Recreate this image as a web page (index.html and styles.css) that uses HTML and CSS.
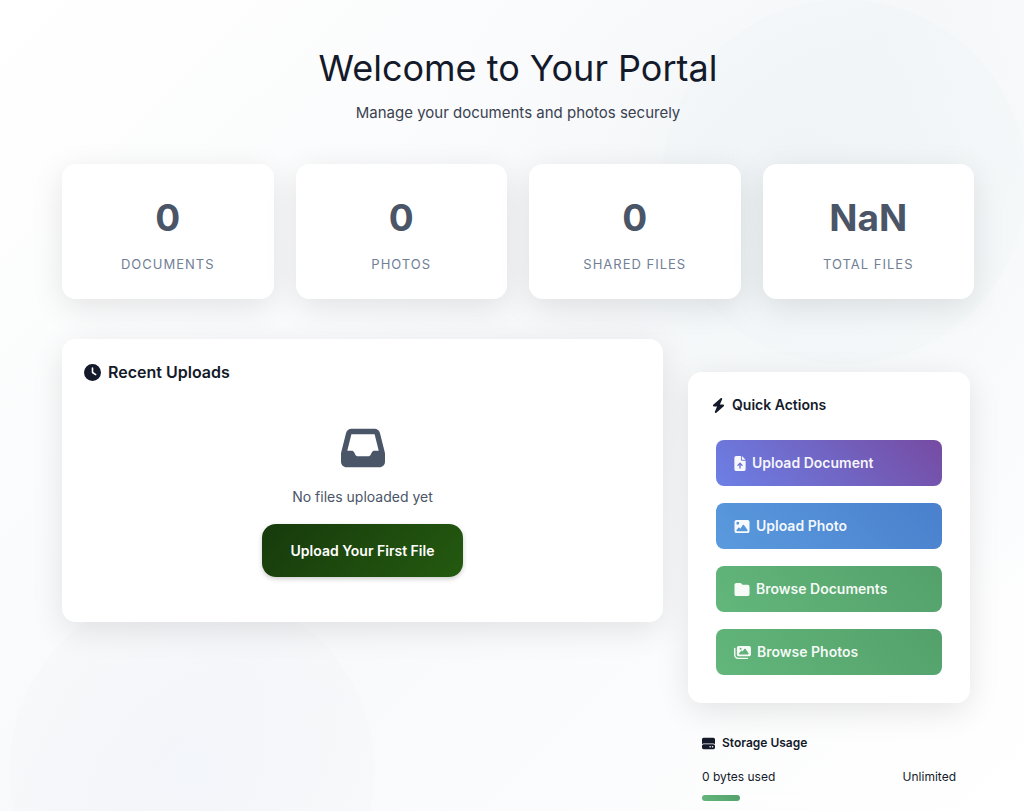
FILE: index.html
```html
<!DOCTYPE html>
<html lang="en">
<head>
<meta charset="utf-8">
<meta name="viewport" content="width=device-width, initial-scale=1">
<title>Your Portal</title>
<link rel="stylesheet" href="styles.css">
</head>
<body>
<main class="portal">
  <header class="hero">
    <h1 class="hero-title">Welcome to Your Portal</h1>
    <p class="hero-text">Manage your documents and photos securely</p>
  </header>

  <section class="stats" aria-label="Statistics">
    <div class="card stat"><div class="stat-value">0</div><div class="stat-label">Documents</div></div>
    <div class="card stat"><div class="stat-value">0</div><div class="stat-label">Photos</div></div>
    <div class="card stat"><div class="stat-value">0</div><div class="stat-label">Shared Files</div></div>
    <div class="card stat"><div class="stat-value">NaN</div><div class="stat-label">Total Files</div></div>
  </section>

  <div class="columns">
    <section class="card recent">
      <h2 class="recent-title">
        <svg class="icon-clock" viewBox="0 0 512 512" aria-hidden="true"><path d="M256 0a256 256 0 1 1 0 512A256 256 0 1 1 256 0zM232 120V256c0 8 4 15.500 10.700 20l96 64c11 7.400 25.900 4.400 33.300-6.700s4.400-25.900-6.700-33.300L280 243.200V120c0-13.300-10.700-24-24-24s-24 10.700-24 24z"/></svg>
        Recent Uploads
      </h2>
      <div class="empty">
        <svg class="icon-inbox" viewBox="0 0 512 512" aria-hidden="true"><path d="M121 32C91.600 32 66 52 58.900 80.500L1.900 308.400C.6 313.500 0 318.700 0 323.900V416c0 35.300 28.700 64 64 64H448c35.300 0 64-28.700 64-64V323.900c0-5.200-.6-10.400-1.900-15.500l-57-227.900C446 52 420.400 32 391 32H121zm0 64H391l48 192H387.800c-12.100 0-23.200 6.800-28.600 17.700l-14.300 28.600c-5.400 10.800-16.500 17.700-28.600 17.700H195.800c-12.100 0-23.200-6.800-28.600-17.700l-14.300-28.600c-5.400-10.800-16.500-17.700-28.600-17.700H73L121 96z"/></svg>
        <p class="empty-text">No files uploaded yet</p>
        <button class="button-primary" type="button">Upload Your First File</button>
      </div>
    </section>

    <aside class="side">
      <section class="card quick">
        <h2 class="quick-title">
          <svg class="icon-bolt" viewBox="0 0 448 512" aria-hidden="true"><path d="M349.400 44.600c5.900-13.700 1.500-29.700-10.600-38.500s-28.600-8-39.900 1.800l-256 224c-10 8.800-13.600 22.900-8.900 35.300S50.700 288 64 288H175.500L98.600 467.400c-5.900 13.700-1.500 29.700 10.600 38.500s28.600 8 39.900-1.800l256-224c10-8.800 13.600-22.900 8.900-35.300s-16.600-20.700-30-20.700H272.500L349.400 44.600z"/></svg>
          Quick Actions
        </h2>
        <div class="actions">
          <button class="action action-violet" type="button">
            <svg class="icon-file" viewBox="0 0 384 512" aria-hidden="true"><path d="M64 0C28.700 0 0 28.700 0 64V448c0 35.300 28.700 64 64 64H320c35.300 0 64-28.700 64-64V160H256c-17.700 0-32-14.300-32-32V0H64zM256 0V128H384L256 0zM216 408c0 13.300-10.700 24-24 24s-24-10.700-24-24V305.900l-31 31c-9.400 9.400-24.600 9.400-33.900 0s-9.400-24.600 0-33.900l72-72c9.400-9.400 24.600-9.400 33.900 0l72 72c9.400 9.400 9.400 24.600 0 33.900s-24.600 9.400-33.900 0l-31-31V408z"/></svg>
            Upload Document
          </button>
          <button class="action action-blue" type="button">
            <svg class="icon-wide" viewBox="0 0 512 512" aria-hidden="true"><path d="M0 96C0 60.700 28.700 32 64 32H448c35.300 0 64 28.700 64 64V416c0 35.300-28.700 64-64 64H64c-35.300 0-64-28.700-64-64V96zM323.800 202.500c-4.500-6.600-11.900-10.500-19.800-10.500s-15.400 3.900-19.800 10.500l-87 127.600L170.700 297c-4.600-5.700-11.500-9-18.700-9s-14.200 3.300-18.700 9l-64 80c-5.800 7.200-6.900 17.100-2.900 25.400s12.400 13.600 21.600 13.600H424c8.900 0 17.100-4.900 21.200-12.800s3.600-17.400-1.400-24.700l-120-176zM112 192a48 48 0 1 0 0-96 48 48 0 1 0 0 96z"/></svg>
            Upload Photo
          </button>
          <button class="action action-green" type="button">
            <svg class="icon-wide" viewBox="0 0 512 512" aria-hidden="true"><path d="M64 480H448c35.300 0 64-28.700 64-64V160c0-35.300-28.700-64-64-64H288c-10.100 0-19.600-4.700-25.600-12.800L243.200 57.600C231.100 41.500 212.100 32 192 32H64C28.700 32 0 60.700 0 96V416c0 35.300 28.700 64 64 64z"/></svg>
            Browse Documents
          </button>
          <button class="action action-green" type="button">
            <svg class="icon-images" viewBox="0 0 576 512" aria-hidden="true"><path d="M160 32c-35.300 0-64 28.700-64 64V320c0 35.300 28.700 64 64 64H512c35.300 0 64-28.700 64-64V96c0-35.300-28.700-64-64-64H160zM396 138.700l96 144c4.900 7.400 5.400 16.800 1.200 24.600S480.900 320 472 320H192c-9.200 0-17.600-5.300-21.600-13.600s-2.900-18.200 2.900-25.400l64-80c4.600-5.700 11.400-9 18.700-9s14.200 3.300 18.700 9l17.300 21.600 56-84C352.500 132 360 128 368 128s15.500 4 28 10.700zM192 128a32 32 0 1 1 64 0 32 32 0 1 1-64 0zM48 120c0-13.300-10.700-24-24-24S0 106.700 0 120V344c0 75.100 60.900 136 136 136H456c13.300 0 24-10.700 24-24s-10.700-24-24-24H136c-48.600 0-88-39.400-88-88V120z"/></svg>
            Browse Photos
          </button>
        </div>
      </section>

      <section class="storage">
        <h2 class="storage-title">
          <svg class="icon-drive" viewBox="0 0 512 512" aria-hidden="true"><path d="M0 96C0 60.700 28.700 32 64 32H448c35.300 0 64 28.700 64 64V280.400c-17-15.200-39.400-24.400-64-24.400H64c-24.600 0-47 9.200-64 24.400V96zM64 288H448c35.300 0 64 28.700 64 64v64c0 35.300-28.700 64-64 64H64c-35.300 0-64-28.700-64-64V352c0-35.300 28.700-64 64-64zM320 416a32 32 0 1 0 0-64 32 32 0 1 0 0 64zm128-32a32 32 0 1 0-64 0 32 32 0 1 0 64 0z"/></svg>
          Storage Usage
        </h2>
        <div class="storage-row"><span>0 bytes used</span><span>Unlimited</span></div>
        <div class="meter"><div class="meter-fill" style="width: 15%"></div></div>
      </section>
    </aside>
  </div>
</main>
</body>
</html>
```
FILE: styles.css
```css
* {
  box-sizing: border-box;
}

body {
  margin: 0;
  min-height: 100vh;
  overflow: hidden;
  color: #141a2a;
  font-family: Inter, "Liberation Sans", sans-serif;
  font-size: 16px;
  background:
    radial-gradient(circle at 192px 770px, rgba(66, 120, 190, 0.03) 0, rgba(80, 90, 130, 0.01) 182px, transparent 183px),
    radial-gradient(circle at 844px 182px, rgba(40, 130, 140, 0.02) 0, rgba(40, 130, 140, 0.01) 182px, transparent 183px),
    radial-gradient(circle at 820px 230px, rgba(40, 130, 140, 0.03) 0, transparent 420px),
    linear-gradient(135deg, #ffffff 0%, #f8f9fb 50%, #ffffff 100%);
}

h1, h2, p {
  margin: 0;
}

button {
  border: 0;
  font: inherit;
  cursor: pointer;
}

svg {
  flex: none;
  fill: currentColor;
}

.portal {
  padding: 44px 50px 8px 62px;
}

.hero {
  text-align: center;
}

.hero-title {
  font-size: 36px;
  font-weight: 400;
  line-height: 48px;
}

.hero-text {
  margin-top: 9px;
  color: #3a4150;
  font-size: 15px;
  line-height: 24px;
}

.card {
  border-radius: 14px;
  background: rgba(255, 255, 255, 0.95);
  box-shadow: 0 8px 32px rgba(0, 0, 0, 0.1);
}

.stats {
  display: grid;
  grid-template-columns: repeat(4, 1fr);
  gap: 22px;
  margin-top: 39px;
}

.stat {
  padding: 31px 16px 24px;
  text-align: center;
}

.stat-value {
  color: #4a5568;
  font-size: 37px;
  font-weight: 700;
  line-height: 46px;
}

.stat-label {
  margin-top: 13px;
  color: #718096;
  font-size: 13px;
  line-height: 21px;
  letter-spacing: 1px;
  text-transform: uppercase;
}

.columns {
  display: grid;
  grid-template-columns: minmax(0, 601fr) minmax(0, 289fr);
  align-items: start;
  gap: 22px;
  margin-top: 40px;
}

.recent {
  padding: 21px 22px 45px;
}

.recent-title,
.quick-title,
.storage-title {
  display: flex;
  align-items: center;
  font-weight: 600;
}

.recent-title {
  gap: 7px;
  font-size: 16px;
  line-height: 24px;
}

.icon-clock {
  width: 17px;
  height: 17px;
}

.empty {
  display: flex;
  flex-direction: column;
  align-items: center;
  padding-top: 42px;
  color: #4a5568;
}

.icon-inbox {
  width: 44px;
  height: 44px;
}

.empty-text {
  margin: 15px 0;
  font-size: 14px;
  line-height: 24px;
}

.button-primary {
  padding: 15px 29px;
  border-radius: 14px;
  color: #ffffff;
  font-size: 14px;
  font-weight: 600;
  line-height: 23px;
  background: linear-gradient(135deg, #173a0c, #245a10);
  box-shadow: 0 2px 5px rgba(0, 0, 0, 0.2);
}

.side {
  padding: 33px 4px 0 3px;
}

.quick {
  padding: 22px 28px 28px;
}

.quick-title {
  gap: 7px;
  margin-left: -4px;
  font-size: 14px;
  line-height: 22px;
}

.icon-bolt {
  width: 13px;
  height: 15px;
}

.actions {
  display: grid;
  gap: 17px;
  margin-top: 24px;
}

.action {
  display: flex;
  align-items: center;
  gap: 6px;
  padding: 11px 18px;
  border-radius: 8px;
  color: rgba(255, 255, 255, 0.95);
  font-size: 14px;
  font-weight: 600;
  line-height: 24px;
}

.action-violet {
  background: linear-gradient(45deg, #6c80e6, #764ba2);
}

.action-blue {
  background: linear-gradient(45deg, #5a9ade, #4a80cc);
}

.action-green {
  background: linear-gradient(45deg, #63b77b, #53a06b);
}

.icon-file {
  width: 12px;
  height: 15px;
}

.icon-wide {
  width: 16px;
  height: 15px;
}

.icon-images {
  width: 17px;
  height: 15px;
}

.storage {
  padding: 30px 14px 0;
}

.storage-title {
  gap: 7px;
  font-size: 12px;
  line-height: 20px;
}

.icon-drive {
  width: 13px;
  height: 13px;
}

.storage-row {
  display: flex;
  justify-content: space-between;
  margin-top: 14px;
  font-size: 12px;
  line-height: 20px;
}

.meter {
  height: 6px;
  margin-top: 8px;
  border-radius: 3px;
  background: rgba(255, 255, 255, 0.4);
}

.meter-fill {
  height: 6px;
  border-radius: 3px;
  background: linear-gradient(45deg, #63b77b, #53a06b);
}
```
